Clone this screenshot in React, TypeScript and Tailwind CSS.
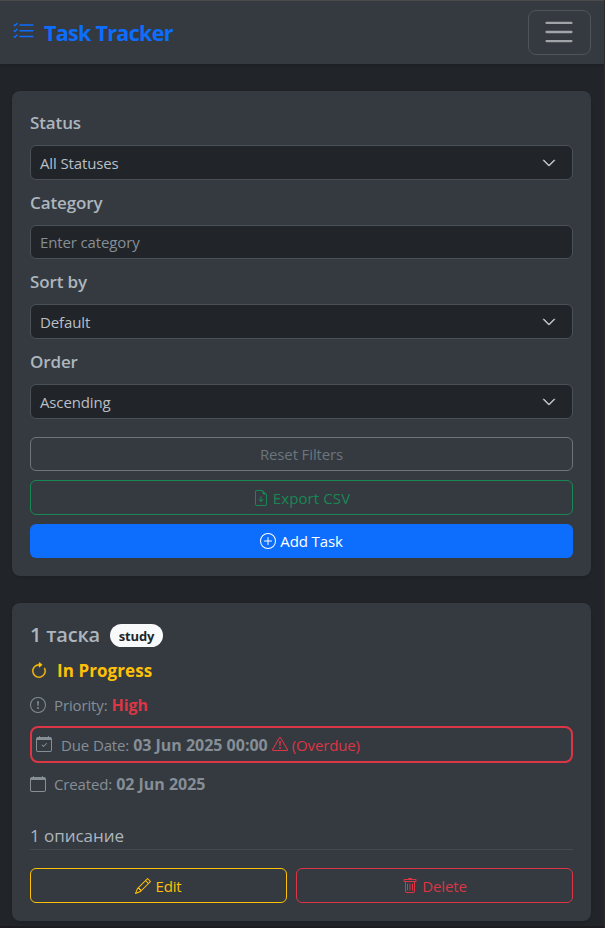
import type { ReactNode } from "react";
import {
  BsListCheck,
  BsFileEarmarkArrowDown,
  BsPlusCircle,
  BsArrowClockwise,
  BsExclamationCircle,
  BsCalendarCheck,
  BsCalendar,
  BsExclamationTriangle,
  BsPencil,
  BsTrash,
  BsChevronDown,
} from "react-icons/bs";

function Label({ children }: { children: ReactNode }) {
  return <div className="h-[26px] text-[17px] leading-[25px] font-semibold tracking-[-0.12px] text-[#adb5bd]">{children}</div>;
}

function Select({ children }: { children: ReactNode }) {
  return (
    <div className="flex h-[35px] items-center justify-between rounded-md border border-[#495057] bg-[#212529] pr-4 pl-[9px] text-[#b9bfc6]">
      <span>{children}</span>
      <BsChevronDown className="size-[14px] stroke-1" />
    </div>
  );
}

export default function App() {
  return (
    <div className="flex h-[928px] w-[605px] flex-col overflow-hidden border-r border-[#2c2b2b] bg-[#212529] font-['Open_Sans','Noto_Sans',sans-serif] text-[15px] leading-[22px] tracking-[-0.13px] text-[#adb5bd]">
      <header className="flex h-16 shrink-0 items-center justify-between border-t border-[#494949] bg-[#343a40] pr-[13px] pl-3 shadow-sm">
        <div className="flex items-center text-[#0d6efd]">
          <BsListCheck className="mb-[3px] size-[23px]" />
          <span className="ml-[9px] text-[21.5px] leading-8 font-bold tracking-[-0.7px]">Task Tracker</span>
        </div>
        <button className="flex h-[45px] w-[63px] items-center justify-center rounded-lg border border-[#505457]">
          <svg viewBox="0 0 30 30" className="mr-0.5 mb-0.5 size-[34px]" fill="none" stroke="#a2a5a8" strokeLinecap="round" strokeMiterlimit="10" strokeWidth="2">
            <path d="M4 7h22M4 15h22M4 23h22" />
          </svg>
        </button>
      </header>

      <section className="mt-[27px] ml-3 flex h-[485px] w-[579px] shrink-0 flex-col rounded-lg bg-[#343a40] px-[18px] pt-[19px] shadow-sm">
        <Label>Status</Label>
        <div className="mt-[9px]"><Select>All Statuses</Select></div>
        <div className="mt-[10px]"><Label>Category</Label></div>
        <div className="mt-[9px] flex h-[34px] items-center rounded-md border border-[#495057] bg-[#212529] pl-[9px] text-[#868e96]">
          Enter category
        </div>
        <div className="mt-[10px]"><Label>Sort by</Label></div>
        <div className="mt-[9px]"><Select>Default</Select></div>
        <div className="mt-[10px]"><Label>Order</Label></div>
        <div className="mt-[9px]"><Select>Ascending</Select></div>
        <button className="mt-[18px] flex h-[34px] shrink-0 items-center justify-center rounded-md border border-[#6c757d] text-[#6c757d]">
          Reset Filters
        </button>
        <button className="mt-[9px] flex h-[35px] shrink-0 items-center justify-center gap-1 rounded-md border border-[#198754] text-[#198754]">
          <BsFileEarmarkArrowDown className="size-4" />
          <span className="tracking-[0.1px]">Export CSV</span>
        </button>
        <button className="mt-[9px] flex h-[34px] shrink-0 items-center justify-center gap-1 rounded-md bg-[#0d6efd] text-white">
          <BsPlusCircle className="size-4" />
          <span>Add Task</span>
        </button>
      </section>

      <section className="mt-[27px] ml-3 flex h-[318px] w-[579px] shrink-0 flex-col rounded-lg bg-[#343a40] px-[18px] pt-[19px] text-[#868e96] shadow-sm">
        <div className="flex h-[26px] items-center">
          <h2 className="w-[70px] text-[20px] font-semibold tracking-[-0.2px] whitespace-nowrap text-[#adb5bd]">1 таска</h2>
          <span className="ml-[10px] flex h-[23px] w-[53px] items-center justify-center rounded-full bg-[#f8f9fa] pt-px text-[13px] font-bold tracking-[-0.2px] text-[#212529]">study</span>
        </div>
        <div className="mt-[10px] flex h-[26px] items-center text-[#ffc107]">
          <BsArrowClockwise className="size-[18px] stroke-[0.3]" />
          <span className="ml-[9px] text-[17px] font-bold tracking-[0.08px]">In Progress</span>
        </div>
        <div className="mt-[9px] flex h-6 items-center">
          <BsExclamationCircle className="size-4" />
          <span className="ml-2">Priority:</span>
          <span className="ml-1 text-[16px] font-bold tracking-[-0.1px] text-[#dc3545]">High</span>
        </div>
        <div className="mt-[9px] flex h-[37px] shrink-0 items-center rounded-lg border-2 border-[#dc3545] pl-1">
          <BsCalendarCheck className="mb-0.5 size-4" />
          <span className="ml-[9px]">Due Date:</span>
          <span className="ml-1 text-[16px] font-bold tracking-[-0.02px]">03 Jun 2025 00:00</span>
          <BsExclamationTriangle className="mb-0.5 ml-1 size-4 text-[#dc3545]" />
          <span className="ml-1 text-[#dc3545]">(Overdue)</span>
        </div>
        <div className="mt-[9px] flex h-6 items-center">
          <BsCalendar className="size-4" />
          <span className="ml-2">Created:</span>
          <span className="ml-1 text-[16px] font-bold tracking-[-0.02px]">02 Jun 2025</span>
        </div>
        <div className="mt-[27px] h-[27px] shrink-0 border-b border-[#45494b] text-[17px] leading-[26px] tracking-[-0.05px] text-[#adb5bd]">1 описание</div>
        <div className="mt-[18px] flex h-[35px] shrink-0 gap-[9px]">
          <button className="flex w-[257px] items-center justify-center gap-1 rounded-md border border-[#ffc107] text-[#ffc107]">
            <BsPencil className="size-4" />
            <span>Edit</span>
          </button>
          <button className="flex flex-1 items-center justify-center gap-1 rounded-md border border-[#dc3545] text-[#dc3545]">
            <BsTrash className="size-4" />
            <span>Delete</span>
          </button>
        </div>
      </section>
      <div className="mt-[5px] h-[3px] shrink-0 bg-[#1c1b20]" />
    </div>
  );
}
